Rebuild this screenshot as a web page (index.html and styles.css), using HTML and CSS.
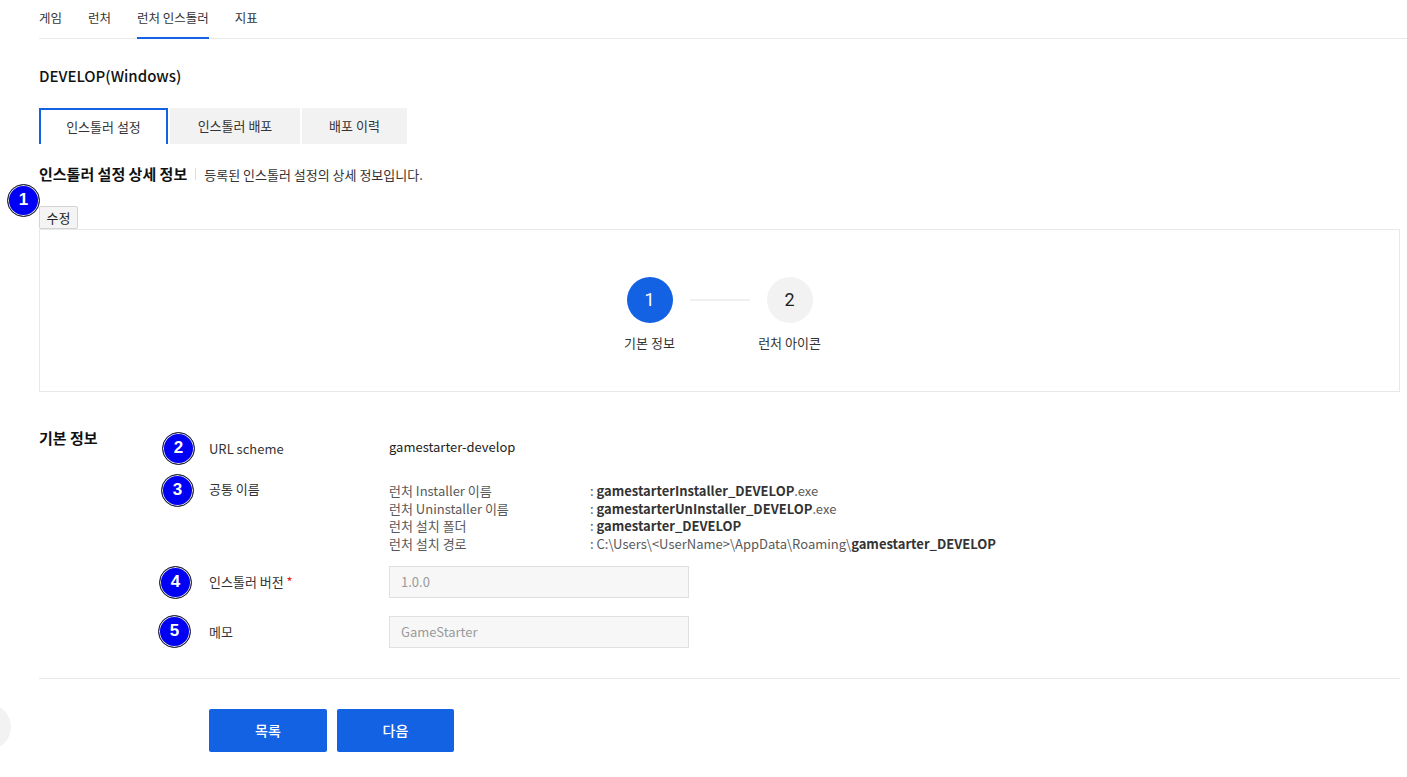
FILE: index.html
```html
<!DOCTYPE html>
<html>
<head>
	<meta charset="utf-8">
	<title>런처 인스톨러 - 인스톨러 설정</title>
	<link rel="stylesheet" href="styles.css">
</head>
<body>
	<div class="page">
		<div class="gnb">
			<a>게임</a>
			<a>런처</a>
			<a class="on">런처 인스톨러</a>
			<a>지표</a>
		</div>

		<div class="content">
			<h2 class="env">DEVELOP(Windows)</h2>

			<div class="tabs">
				<a class="tab t1 on">인스톨러 설정</a>
				<a class="tab t2">인스톨러 배포</a>
				<a class="tab t3">배포 이력</a>
			</div>

			<div class="sect-head">
				<h3>인스톨러 설정 상세 정보</h3>
				<span class="bar"></span>
				<p>등록된 인스톨러 설정의 상세 정보입니다.</p>
			</div>

			<button class="btn-edit">수정</button>

			<div class="stepper">
				<div class="step on">
					<div class="num">1</div>
					<div class="name">기본 정보</div>
				</div>
				<div class="step-line"></div>
				<div class="step">
					<div class="num">2</div>
					<div class="name">런처 아이콘</div>
				</div>
			</div>

			<div class="info">
				<h4 class="info-title">기본 정보</h4>
				<div class="rows">
					<div class="row r1">
						<div class="lbl">URL scheme</div>
						<div class="val">gamestarter-develop</div>
					</div>
					<div class="row r2">
						<div class="lbl">공통 이름</div>
						<dl class="names">
							<dt>런처 Installer 이름</dt><dd>: <b>gamestarterInstaller_DEVELOP</b>.exe</dd>
							<dt>런처 Uninstaller 이름</dt><dd>: <b>gamestarterUnInstaller_DEVELOP</b>.exe</dd>
							<dt>런처 설치 폴더</dt><dd>: <b>gamestarter_DEVELOP</b></dd>
							<dt>런처 설치 경로</dt><dd>: C:\Users\&lt;UserName&gt;\AppData\Roaming\<b>gamestarter_DEVELOP</b></dd>
						</dl>
					</div>
					<div class="row r3">
						<div class="lbl">인스톨러 버전 <em>*</em></div>
						<input class="inp" type="text" placeholder="1.0.0" disabled>
					</div>
					<div class="row r4">
						<div class="lbl">메모</div>
						<input class="inp" type="text" placeholder="GameStarter" disabled>
					</div>
				</div>
			</div>

			<div class="foot">
				<button class="btn-blue w1">목록</button>
				<button class="btn-blue w2">다음</button>
			</div>
		</div>

		<!-- annotation markers -->
		<span class="mark m1">1</span>
		<span class="mark m2">2</span>
		<span class="mark m3">3</span>
		<span class="mark m4">4</span>
		<span class="mark m5">5</span>
	</div>
	<div class="float-btn"></div>
</body>
</html>
```

FILE: styles.css
```css
html, body {
	margin: 0;
	padding: 0;
	background: #fff;
}

body {
	font-family: "Noto Sans CJK KR", "Noto Sans", sans-serif;
	color: #222;
	overflow: hidden;
}

.page {
	position: relative;
	min-height: 777px;
}

/* top menu */
.gnb {
	display: flex;
	gap: 26px;
	margin-left: 39px;
	height: 39px;
	border-bottom: 1px solid #e9e9e9;
	box-sizing: border-box;
}

.gnb a {
	display: block;
	font-size: 12.5px;
	line-height: 20px;
	padding-top: 8px;
	height: 37px;
	box-sizing: border-box;
	color: #333;
}

.gnb a.on {
	border-bottom: 2px solid #1462e4;
	height: 39px;
}

.content {
	padding: 0 7px 0 39px;
}

.env {
	margin: 26px 0 0;
	font-size: 15px;
	font-weight: 500;
	line-height: 22px;
	color: #111;
}

/* tabs */
.tabs {
	display: flex;
	gap: 2px;
	margin-top: 21px;
}

.tab {
	display: block;
	height: 36px;
	line-height: 36px;
	text-align: center;
	font-size: 13px;
	color: #333;
	background: #f2f2f2;
	box-sizing: border-box;
}

.tab.t1 { width: 129px; }
.tab.t2 { width: 130px; }
.tab.t3 { width: 105px; }

.tab.on {
	background: #fff;
	border: 2px solid #1462e4;
	border-bottom: 0;
	line-height: 34px;
}

/* section head */
.sect-head {
	display: flex;
	align-items: center;
	margin-top: 18px;
	height: 22px;
}

.sect-head h3 {
	margin: 0;
	font-size: 15px;
	font-weight: 700;
	color: #111;
}

.sect-head .bar {
	width: 1px;
	height: 12px;
	background: #ddd;
	margin: 2px 8px 0 8px;
}

.sect-head p {
	margin: 0;
	font-size: 13px;
	color: #333;
	padding-top: 2px;
}

.btn-edit {
	display: block;
	margin-top: 22px;
	width: 39px;
	height: 23px;
	padding: 0;
	font-family: inherit;
	font-size: 13px;
	color: #222;
	background: #f4f4f4;
	border: 1px solid #d4d4d4;
	border-radius: 2px;
}

/* stepper */
.stepper {
	display: flex;
	justify-content: center;
	height: 163px;
	padding-top: 47px;
	box-sizing: border-box;
	border: 1px solid #e8e8e8;
}

.step {
	width: 80px;
	display: flex;
	flex-direction: column;
	align-items: center;
}

.step .num {
	width: 46px;
	height: 46px;
	border-radius: 50%;
	background: #f2f2f2;
	color: #222;
	font-family: Roboto, "Noto Sans", sans-serif;
	font-size: 18px;
	line-height: 46px;
	text-align: center;
}

.step.on .num {
	background: #1462e4;
	color: #fff;
}

.step .name {
	margin-top: 10px;
	font-size: 13px;
	color: #333;
	white-space: nowrap;
}

.step-line {
	width: 60px;
	height: 2px;
	margin-top: 22px;
	background: #f0f0f0;
}

/* base info */
.info {
	display: flex;
	margin-top: 35px;
}

.info-title {
	width: 170px;
	margin: 0;
	font-size: 15px;
	font-weight: 700;
	line-height: 22px;
	color: #111;
}

.rows {
	padding-top: 11px;
}

.row {
	display: flex;
}

.row .lbl {
	width: 180px;
	font-size: 13px;
	line-height: 22px;
	color: #333;
}

.row .lbl em {
	color: #e0201a;
	font-style: normal;
}

.row .val {
	font-size: 13px;
	line-height: 22px;
	color: #222;
	margin-top: -2px;
}

.r2 { margin-top: 18px; }
.r3 { margin-top: 13px; align-items: center; }
.r4 { margin-top: 18px; align-items: center; }

.names {
	display: grid;
	grid-template-columns: 201px auto;
	margin: 4px 0 0;
	font-size: 13px;
	line-height: 17.7px;
	color: #595959;
}

.names dt, .names dd {
	margin: 0;
}

.names b {
	color: #333;
	font-weight: 700;
}

.inp {
	width: 300px;
	height: 32px;
	box-sizing: border-box;
	padding: 0 11px;
	font-family: inherit;
	font-size: 13px;
	background: #f7f7f7;
	border: 1px solid #e0e0e0;
	border-radius: 0;
	outline: none;
}

.inp::placeholder {
	color: #9a9a9a;
}

/* bottom */
.foot {
	display: flex;
	gap: 10px;
	margin-top: 30px;
	border-top: 1px solid #e8e8e8;
	padding: 30px 0 0 170px;
}

.btn-blue {
	height: 43px;
	padding: 0;
	font-family: inherit;
	font-size: 14px;
	font-weight: 500;
	color: #fff;
	background: #1462e4;
	border: 0;
	border-radius: 2px;
}

.btn-blue.w1 { width: 118px; }
.btn-blue.w2 { width: 117px; }

/* markers */
.mark {
	position: absolute;
	width: 33px;
	height: 33px;
	box-sizing: border-box;
	border-radius: 50%;
	background: #0000f5;
	border: 1.5px solid #222;
	box-shadow: inset 0 0 0 1px #ddd;
	color: #fff;
	font-family: "Liberation Sans", Arial, sans-serif;
	font-weight: 700;
	font-size: 17px;
	line-height: 30px;
	text-align: center;
}

.m1 { left: 7px; top: 184px; }
.m2 { left: 162px; top: 432px; }
.m3 { left: 161px; top: 474px; }
.m4 { left: 159px; top: 566px; }
.m5 { left: 158px; top: 615px; }

.float-btn {
	position: fixed;
	left: -35px;
	top: 704px;
	width: 46px;
	height: 46px;
	border-radius: 50%;
	background: #f2f2f2;
}
```
